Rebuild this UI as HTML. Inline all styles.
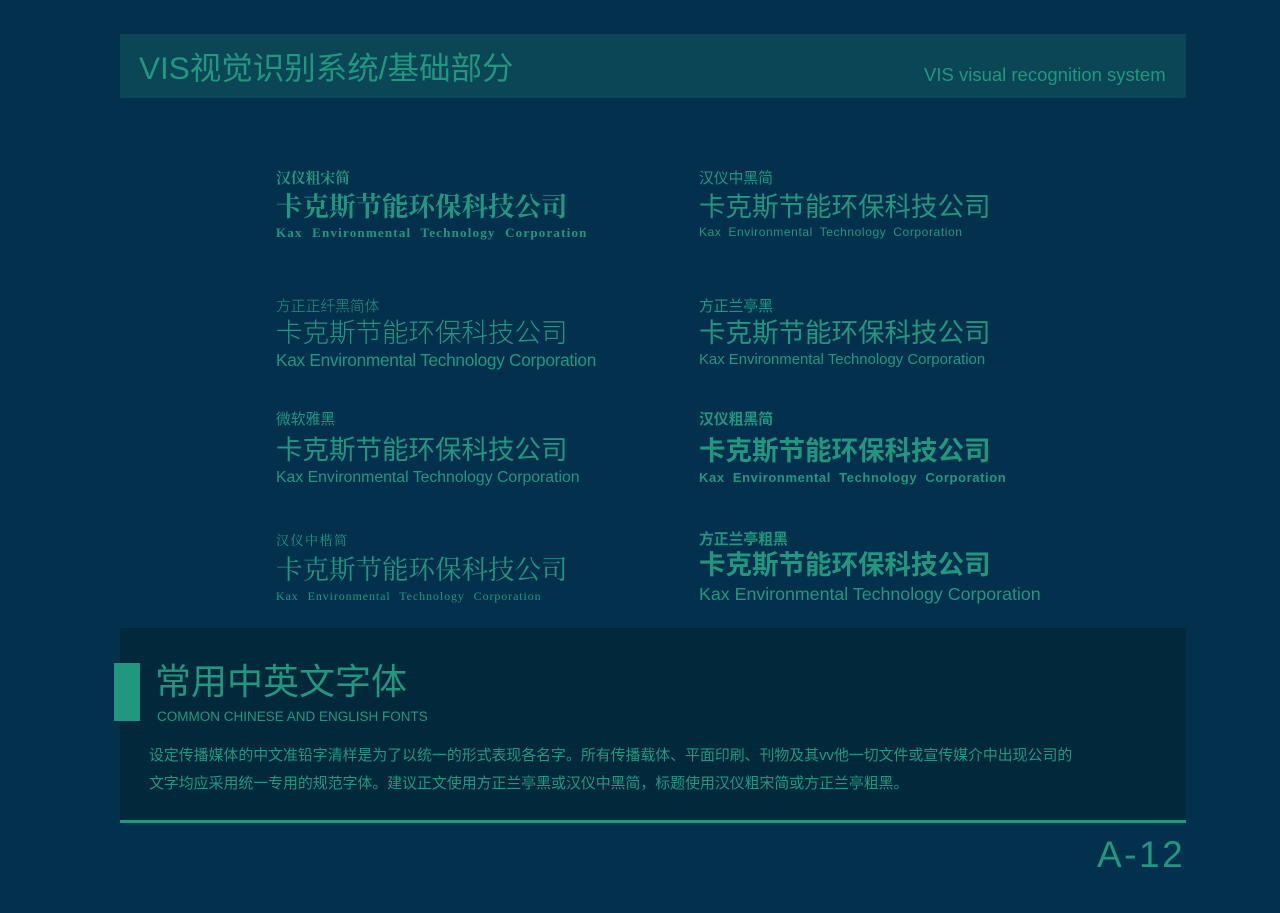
<!DOCTYPE html>
<html><head><meta charset="utf-8"><style>
*{margin:0;padding:0;box-sizing:border-box}
body{width:1280px;height:913px;background:#03304d;position:relative;overflow:hidden;font-family:"Liberation Sans","Noto Sans CJK SC",sans-serif;color:#22977f}
.a{position:absolute;white-space:nowrap;line-height:1}
.hdr{position:absolute;left:120px;top:34px;width:1066px;height:64px;background:#0a4656}
.sf{font-family:"Liberation Serif","Noto Serif CJK SC",serif}
.panel{position:absolute;left:120px;top:628px;width:1066px;height:192px;background:#02293b}
.m{font-size:26.5px}
.l{font-size:14.8px}
</style></head><body>
<div class="hdr"></div>
<div class="a" style="left:139px;top:53px;font-size:31.5px">VIS视觉识别系统/基础部分</div>
<div class="a" style="left:924px;top:66px;font-size:18.5px">VIS visual recognition system</div>

<div class="a sf l" style="left:276px;top:172px;font-weight:bold">汉仪粗宋简</div>
<div class="a sf m" style="left:276px;top:194px;font-weight:bold">卡克斯节能环保科技公司</div>
<div class="a sf" style="left:276px;top:226px;font-size:13px;font-weight:bold;letter-spacing:1.2px;word-spacing:5px">Kax Environmental Technology Corporation</div>

<div class="a l" style="left:699px;top:172px">汉仪中黑简</div>
<div class="a m" style="left:699px;top:194px">卡克斯节能环保科技公司</div>
<div class="a" style="left:699px;top:226px;font-size:12px;letter-spacing:0.6px;word-spacing:3px">Kax Environmental Technology Corporation</div>

<div class="a l" style="left:276px;top:300px;font-weight:300">方正正纤黑简体</div>
<div class="a m" style="left:276px;top:320px;font-weight:300">卡克斯节能环保科技公司</div>
<div class="a" style="left:276px;top:352px;font-size:17.3px;font-weight:300;letter-spacing:-0.3px">Kax Environmental Technology Corporation</div>

<div class="a l" style="left:699px;top:300px">方正兰亭黑</div>
<div class="a m" style="left:699px;top:320px">卡克斯节能环保科技公司</div>
<div class="a" style="left:699px;top:353px;font-size:14.9px">Kax Environmental Technology Corporation</div>

<div class="a l" style="left:276px;top:413px">微软雅黑</div>
<div class="a m" style="left:276px;top:437px">卡克斯节能环保科技公司</div>
<div class="a" style="left:276px;top:470px;font-size:15.8px">Kax Environmental Technology Corporation</div>

<div class="a l" style="left:699px;top:413px;font-weight:bold">汉仪粗黑简</div>
<div class="a m" style="left:699px;top:438px;font-weight:bold">卡克斯节能环保科技公司</div>
<div class="a" style="left:699px;top:471px;font-size:13px;font-weight:bold;letter-spacing:0.6px;word-spacing:4px">Kax Environmental Technology Corporation</div>

<div class="a sf" style="left:276px;top:534px;font-size:13px;letter-spacing:1.5px">汉仪中楷简</div>
<div class="a sf m" style="left:276px;top:557px">卡克斯节能环保科技公司</div>
<div class="a sf" style="left:276px;top:590px;font-size:12px;letter-spacing:0.9px;word-spacing:5px">Kax Environmental Technology Corporation</div>

<div class="a l" style="left:699px;top:533px;font-weight:bold">方正兰亭粗黑</div>
<div class="a m" style="left:699px;top:552px;font-weight:bold">卡克斯节能环保科技公司</div>
<div class="a" style="left:699px;top:586px;font-size:17.8px">Kax Environmental Technology Corporation</div>

<div class="panel"></div>
<div style="position:absolute;left:114px;top:663px;width:26px;height:58px;background:#22977f"></div>
<div class="a" style="left:155px;top:664px;font-size:36px">常用中英文字体</div>
<div class="a" style="left:157px;top:710px;font-size:13.5px">COMMON CHINESE AND ENGLISH FONTS</div>
<div class="a" style="left:149px;top:749px;font-size:14.9px">设定传播媒体的中文准铅字清样是为了以统一的形式表现各名字。所有传播载体、平面印刷、刊物及其vv他一切文件或宣传媒介中出现公司的</div>
<div class="a" style="left:149px;top:777px;font-size:14.9px">文字均应采用统一专用的规范字体。建议正文使用方正兰亭黑或汉仪中黑简，标题使用汉仪粗宋简或方正兰亭粗黑。</div>
<div style="position:absolute;left:120px;top:820px;width:1066px;height:3px;background:#22977f"></div>
<div class="a" style="left:1097px;top:836px;font-size:37px;letter-spacing:2.5px">A-12</div>
</body></html>
